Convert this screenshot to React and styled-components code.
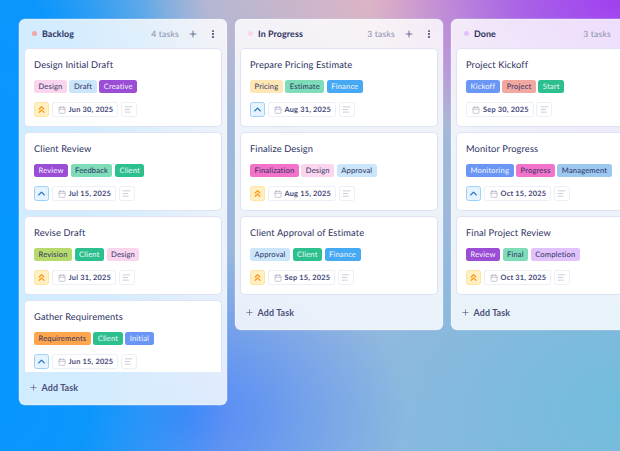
import React from "react";
import styled, { createGlobalStyle } from "styled-components";
import { ChevronsUp, ChevronUp, Plus, EllipsisVertical, Calendar, AlignLeft } from "lucide-react";

const Global = createGlobalStyle`
  html, body { margin: 0; padding: 0; }
  body {
    font-family: "Lato", "Liberation Sans", sans-serif;
    text-rendering: geometricPrecision;
  }
`;

const Page = styled.div`
  width: 620px;
  height: 451px;
  overflow: hidden;
  box-sizing: border-box;
  padding: 19px 0 0 19px;
  background-color: #8fb6e2;
  background-image:
    radial-gradient(ellipse 250px 170px at 100% 0%, #a13ff0 0%, rgba(161,63,240,.7) 40%, rgba(161,63,240,0) 100%),
    radial-gradient(ellipse 240px 150px at 62% 0%, #e0b4c4 0%, rgba(224,180,196,0) 100%),
    radial-gradient(ellipse 230px 620px at 0% 60%, #0597ff 0%, #0b96fc 45%, rgba(13,151,251,0) 100%),
    radial-gradient(ellipse 220px 170px at 30% 92%, #4f86f8 0%, rgba(79,134,248,0) 100%),
    radial-gradient(ellipse 300px 240px at 100% 90%, #72bcdc 0%, rgba(114,188,220,0) 100%),
    linear-gradient(180deg, #a5b8d8, #90b8e0);
`;

const Board = styled.div`
  display: flex;
  align-items: flex-start;
  gap: 8px;
`;

const Column = styled.section`
  flex: 0 0 208px;
  width: 208px;
  box-sizing: border-box;
  border-radius: 6px;
  background: rgba(255, 255, 255, 0.82);
  box-shadow: inset 0 0 0 1px rgba(255, 255, 255, 0.25), 0 0 0 0.5px rgba(190, 205, 235, 0.6);
  overflow: hidden;
`;

const Header = styled.header`
  height: 29px;
  display: flex;
  align-items: center;
  padding: 0 9px 0 13px;
  box-sizing: border-box;
  color: #2b3060;
`;

const Dot = styled.span`
  width: 5px;
  height: 5px;
  border-radius: 50%;
  background: ${(p) => p.$color};
  margin-right: 5px;
`;

const ColumnTitle = styled.h2`
  margin: 0;
  flex: 1;
  font-size: 8.9px;
  font-weight: 700;
  letter-spacing: 0.1px;
`;

const Count = styled.span`
  font-size: 8.6px;
  color: #8b8fae;
  letter-spacing: 0.2px;
  margin-right: 9px;
`;

const HeaderIcon = styled.span`
  display: flex;
  width: 10px;
  justify-content: center;
  margin-left: ${(p) => p.$gap || 0}px;
  color: #2f3563;
`;

const List = styled.div`
  display: flex;
  flex-direction: column;
  gap: 5px;
  padding: 0 5px;
  max-height: 324px;
  overflow: hidden;
`;

const Card = styled.article`
  flex: 0 0 79px;
  height: 79px;
  box-sizing: border-box;
  background: #fff;
  border: 1px solid #dde2f5;
  border-radius: 5px;
  padding: 10px 9px 0;
`;

const CardTitle = styled.h3`
  margin: 0;
  height: 11px;
  line-height: 11px;
  font-size: 9.3px;
  font-weight: 400;
  letter-spacing: 0.12px;
  color: #2d3262;
  white-space: nowrap;
`;

const Tags = styled.div`
  display: flex;
  gap: 2.5px;
  margin-top: 10px;
`;

const Tag = styled.span`
  height: 12.5px;
  line-height: 12.5px;
  padding: 0 4.5px;
  border-radius: 2.5px;
  font-size: 7.6px;
  letter-spacing: 0.15px;
  white-space: nowrap;
  color: ${(p) => (p.$light ? "#f2f5ff" : "#2d3262")};
  background: ${(p) => p.$bg};
`;

const Meta = styled.div`
  display: flex;
  gap: 2.5px;
  margin-top: 9.5px;
`;

const Priority = styled.span`
  width: 15px;
  height: 15px;
  box-sizing: border-box;
  display: flex;
  align-items: center;
  justify-content: center;
  border-radius: 2.5px;
  border: 1px solid ${(p) => (p.$high ? "#ffe3a0" : "#9fd2fb")};
  background: ${(p) => (p.$high ? "#fff0c4" : "#e6f3fe")};
  color: ${(p) => (p.$high ? "#fb9c1f" : "#1f6fc0")};
`;

const DateChip = styled.span`
  height: 15px;
  box-sizing: border-box;
  display: flex;
  align-items: center;
  gap: 3px;
  padding: 0 4px 0 5px;
  border: 1px solid #eceef8;
  border-radius: 2.5px;
  font-size: 7.4px;
  font-weight: 700;
  letter-spacing: 0.2px;
  color: #44497a;
  white-space: nowrap;
  svg { color: #9a9db8; }
`;

const NotesChip = styled.span`
  width: 16px;
  height: 15px;
  box-sizing: border-box;
  display: flex;
  align-items: center;
  justify-content: center;
  border: 1px solid #eceef8;
  border-radius: 2.5px;
  color: #a9abc2;
`;

const Footer = styled.button`
  display: flex;
  align-items: center;
  gap: 3.5px;
  width: 100%;
  height: ${(p) => (p.$tall ? 33 : 35)}px;
  padding: 0 0 ${(p) => (p.$tall ? 2 : 0)}px 10px;
  border: 0;
  background: transparent;
  font-family: inherit;
  font-size: 8.9px;
  font-weight: 700;
  letter-spacing: 0.15px;
  color: #4a4f78;
  box-sizing: border-box;
`;

const C = {
  pink: "#fbd5ee", sky: "#cbe6fb", purple: "#9b4dd6", green: "#2cc08e", teal: "#7edcb8",
  lime: "#b6db6c", orange: "#ffa54d", blue: "#6a96f6", cream: "#ffe6b5", azure: "#45a9f3",
  salmon: "#f2a7a0", magenta: "#f273c9", steel: "#9cc7ef", lilac: "#e1c2fb",
};

const t = (label, bg, light) => ({ label, bg, light });

const columns = [
  {
    title: "Backlog", dot: "#f6a6a0", count: "4 tasks", tall: true,
    cards: [
      { title: "Design Initial Draft", tags: [t("Design", C.pink), t("Draft", C.sky), t("Creative", C.purple, 1)], p: "high", date: "Jun 30, 2025" },
      { title: "Client Review", tags: [t("Review", C.purple, 1), t("Feedback", C.teal), t("Client", C.green, 1)], p: "med", date: "Jul 15, 2025" },
      { title: "Revise Draft", tags: [t("Revision", C.lime), t("Client", C.green, 1), t("Design", C.pink)], p: "high", date: "Jul 31, 2025" },
      { title: "Gather Requirements", tags: [t("Requirements", C.orange), t("Client", C.green, 1), t("Initial", C.blue, 1)], p: "med", date: "Jun 15, 2025" },
    ],
  },
  {
    title: "In Progress", dot: "#fbd5ee", count: "3 tasks",
    cards: [
      { title: "Prepare Pricing Estimate", tags: [t("Pricing", C.cream), t("Estimate", C.teal), t("Finance", C.azure, 1)], p: "med", date: "Aug 31, 2025" },
      { title: "Finalize Design", tags: [t("Finalization", C.magenta), t("Design", C.pink), t("Approval", C.sky)], p: "high", date: "Aug 15, 2025" },
      { title: "Client Approval of Estimate", tags: [t("Approval", C.sky), t("Client", C.green, 1), t("Finance", C.azure, 1)], p: "high", date: "Sep 15, 2025" },
    ],
  },
  {
    title: "Done", dot: "#e1c2fb", count: "3 tasks",
    cards: [
      { title: "Project Kickoff", tags: [t("Kickoff", C.blue, 1), t("Project", C.salmon), t("Start", C.green, 1)], date: "Sep 30, 2025" },
      { title: "Monitor Progress", tags: [t("Monitoring", C.blue, 1), t("Progress", C.magenta), t("Management", C.steel)], p: "med", date: "Oct 15, 2025" },
      { title: "Final Project Review", tags: [t("Review", C.purple, 1), t("Final", C.teal), t("Completion", C.lilac)], p: "high", date: "Oct 31, 2025" },
    ],
  },
];

export default function App() {
  return (
    <Page>
      <Global />
      <Board>
        {columns.map((col) => (
          <Column key={col.title}>
            <Header>
              <Dot $color={col.dot} />
              <ColumnTitle>{col.title}</ColumnTitle>
              <Count>{col.count}</Count>
              <HeaderIcon><Plus size={10} strokeWidth={1.6} /></HeaderIcon>
              <HeaderIcon $gap={10}><EllipsisVertical size={12} strokeWidth={2.6} /></HeaderIcon>
            </Header>
            <List>
              {col.cards.map((card) => (
                <Card key={card.title}>
                  <CardTitle>{card.title}</CardTitle>
                  <Tags>
                    {card.tags.map((tag) => (
                      <Tag key={tag.label} $bg={tag.bg} $light={tag.light}>{tag.label}</Tag>
                    ))}
                  </Tags>
                  <Meta>
                    {card.p && (
                      <Priority $high={card.p === "high"}>
                        {card.p === "high"
                          ? <ChevronsUp size={11} strokeWidth={2.8} />
                          : <ChevronUp size={11} strokeWidth={2.8} />}
                      </Priority>
                    )}
                    <DateChip>
                      <Calendar size={8} strokeWidth={1.6} />
                      {card.date}
                    </DateChip>
                    <NotesChip><AlignLeft size={9} strokeWidth={1.6} /></NotesChip>
                  </Meta>
                </Card>
              ))}
            </List>
            <Footer $tall={col.tall}>
              <Plus size={9} strokeWidth={1.6} />
              Add Task
            </Footer>
          </Column>
        ))}
      </Board>
    </Page>
  );
}
